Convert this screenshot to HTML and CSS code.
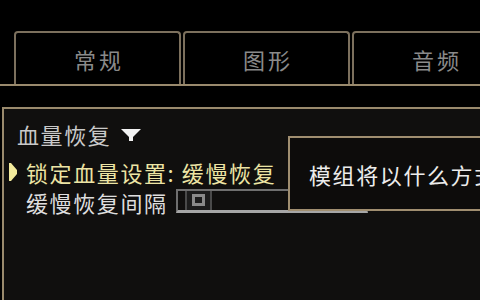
FILE: index.html
```html
<!DOCTYPE html>
<html lang="zh">
<head>
    <meta charset="UTF-8">
    <title>设置</title>
    <link rel="stylesheet" href="styles.css">
</head>
<body>
    <div class="tabs">
        <div class="tab">常规</div>
        <div class="tab">图形</div>
        <div class="tab">音频</div>
    </div>

    <div class="panel">
        <div class="section">
            <span>血量恢复</span>
            <svg class="caret" width="20" height="12" viewBox="0 0 20 12">
                <polygon points="0,0 20,0 12,8 12,12 8,12 8,8" fill="#f2f2f2"/>
            </svg>
        </div>

        <div class="row active">
            <svg class="pointer" width="8" height="18" viewBox="0 0 8 18">
                <polygon points="0,0 2,0 8,7 8,11 2,18 0,18" fill="#f3eb9c"/>
            </svg>
            <span>锁定血量设置: 缓慢恢复</span>
        </div>

        <div class="row">
            <span>缓慢恢复间隔</span>
            <div class="slider">
                <div class="slider-left"></div>
                <div class="slider-handle"><i></i></div>
            </div>
        </div>

        <div class="tooltip">
            <p>模组将以什么方式锁定血量</p>
        </div>
    </div>
</body>
</html>
```

FILE: styles.css
```css
*{
    margin: 0;
    padding: 0;
    box-sizing: border-box;
}

body{
    background: #000;
    width: 480px;
    height: 300px;
    overflow: hidden;
    font-family: "Noto Sans CJK SC", "Noto Sans", sans-serif;
}

.tabs{
    display: flex;
    gap: 2px;
    padding: 31px 0 0 14px;
    height: 86px;
    border-bottom: 2px solid #9a8a6d;
}

.tab{
    flex: none;
    width: 167px;
    height: 53px;
    border: 2px solid #7c705d;
    border-bottom: 0;
    border-radius: 4px 4px 0 0;
    color: #8a8a8a;
    font-size: 22px;
    letter-spacing: 3px;
    display: flex;
    align-items: center;
    justify-content: center;
    padding-left: 3px;
}

.panel{
    position: relative;
    margin: 21px 0 0 2px;
    height: 200px;
    background: #100f0e;
    border-top: 2px solid #9a8a6d;
    border-left: 2px solid #9a8a6d;
    padding: 7px 0 0 13px;
    font-size: 22px;
    letter-spacing: 1.6px;
}

.section{
    display: flex;
    align-items: center;
    height: 36px;
    color: #c9c9c9;
}

.caret{
    margin: 2px 0 0 10px;
}

.row{
    display: flex;
    align-items: center;
    height: 29px;
    padding-left: 9px;
    color: #dedede;
}

.row.active{
    height: 35px;
    color: #ece4a4;
    padding-top: 4px;
}

.pointer{
    margin-left: -17px;
    margin-right: 9px;
}

.slider{
    display: flex;
    width: 192px;
    height: 24px;
    margin: -2px 0 0 8px;
    border: 2px solid #6f6f6f;
    border-bottom: 3px solid #a6a6a6;
}

.slider-left{
    width: 9px;
    border-right: 2px solid #4a4a4a;
}

.slider-handle{
    width: 25px;
    background: #1c1c1c;
    border-right: 2px solid #4a4a4a;
    display: flex;
    align-items: center;
    justify-content: center;
}

.slider-handle i{
    width: 13px;
    height: 12px;
    border: 3px solid #8a8a8a;
}

.tooltip{
    position: absolute;
    left: 284px;
    top: 27px;
    width: 194px;
    height: 75px;
    background: #0d0c0b;
    border: 2px solid #a08e70;
    border-right: 0;
    padding: 0 0 0 19px;
    display: flex;
    align-items: center;
    color: #ececec;
    white-space: nowrap;
    overflow: hidden;
}
```
